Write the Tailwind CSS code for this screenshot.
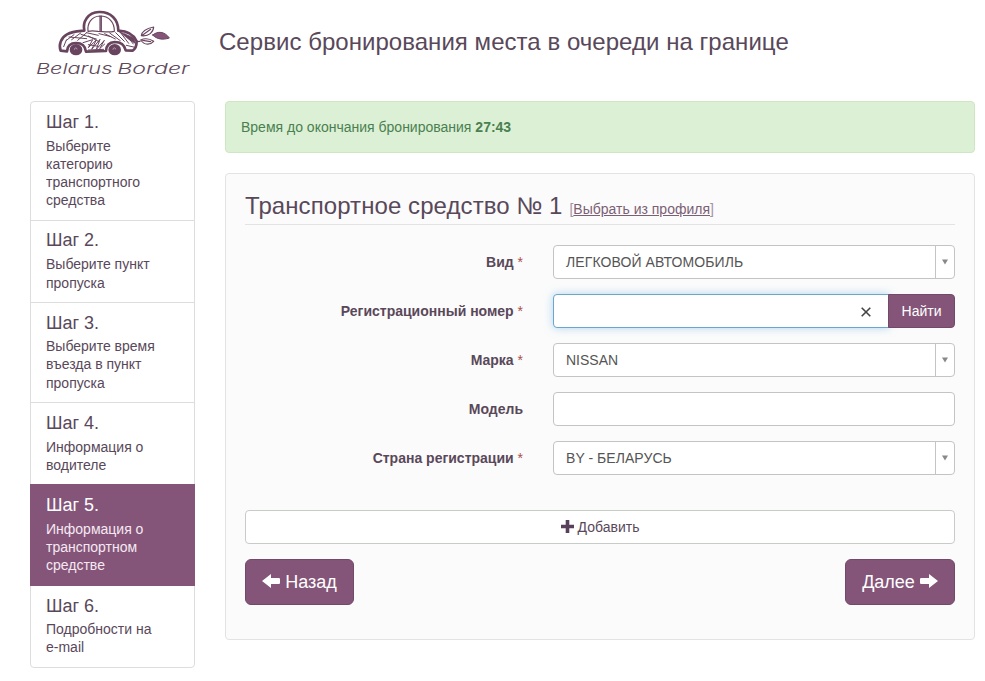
<!DOCTYPE html>
<html lang="ru">
<head>
  <meta charset="UTF-8">
  <meta name="viewport" content="width=device-width, initial-scale=1.0">
  <title>Belarus Border</title>
  <script src="https://cdn.jsdelivr.net/npm/@tailwindcss/browser@4"></script>
</head>
<body class="bg-white font-['Liberation_Sans',Arial,sans-serif] text-sm leading-5 text-[#59485a] h-[681px] overflow-hidden">
  <!-- Header -->
  <header class="flex h-[101px] pl-[25px]">
    <svg class="w-[180px] h-[90px] shrink-0" viewBox="0 0 540 270" fill="none" stroke="#69445f" stroke-linecap="round" stroke-linejoin="round">
      <!-- Car body -->
      <path d="M107 152C100 135 108 113 126 103C143 94 158 94 178 92C172 66 188 37 222 36C257 35 280 58 280 92C303 93 326 103 335 124C335 137 331 147 323 152L302 151C298 133 285 126 269 126C252 127 244 138 243 153L183 155C181 138 170 129 153 129C135 129 127 140 126 154Z" stroke-width="8"/>
      <!-- Windows -->
      <path d="M189 94C186 70 199 49 225 48C252 48 269 67 268 94C250 98 237 95 219 94C207 92 197 92 189 94Z" stroke-width="3.5"/>
      <path d="M225 48V93M229 48V94" stroke-width="3.5"/>
      <!-- Hatching -->
      <path d="M116 140L124 120M124 121L147 104M140 119L167 99M158 121L184 99M132 111L185 116M168 103L214 117M184 98L220 106M174 128L203 119L190 143L214 120L200 148L225 118L214 148L238 121L224 146L239 132M190 108L222 125M222 101L258 110M239 101L271 117M254 99L286 122M272 98L298 124M286 97L311 130M300 101L325 132M304 136L326 141M190 134L220 139M190 150L236 148" stroke-width="3"/>
      <path d="M283 95L326 113L332 131L314 120Z" fill="#69445f" stroke-width="2"/>
      <path d="M335 125L345 124" stroke-width="4"/>
      <!-- Wheels -->
      <ellipse cx="153" cy="149" rx="19" ry="17" fill="#69445f" stroke="none"/>
      <ellipse cx="269" cy="149" rx="19" ry="17" fill="#69445f" stroke="none"/>
      <path d="M148 148C148 142 156 142 156 147M264 148C264 142 272 142 272 147" stroke="#d9c9d6" stroke-width="2"/>
      <!-- Leaves -->
      <path d="M349 107C351 91 366 85 386 81C385 96 372 110 349 107ZM353 105L377 88M347 120C362 113 374 116 386 124C376 135 359 137 347 120ZM353 121L377 125" stroke-width="3.5"/>
      <path d="M383 105C398 92 419 94 433 114C414 120 397 119 383 105Z" fill="#845578" stroke-width="3"/>
      <g fill="#5f4a5c" stroke="none" font-family="Inter" font-weight="300" font-style="italic" font-size="45">
        <text x="33" y="221" textLength="229" lengthAdjust="spacingAndGlyphs">Belarus</text>
        <text x="277" y="221" textLength="216" lengthAdjust="spacingAndGlyphs">Border</text>
      </g>
    </svg>
    <h1 class="ml-[14px] mt-[27px] text-2xl leading-[30px] tracking-[0.04px] whitespace-nowrap">Сервис бронирования места в очереди на границе</h1>
  </header>

  <div class="flex items-start gap-[30px] px-[30px]">
    <!-- Steps -->
    <nav class="w-[165px] shrink-0 rounded border border-[#ddd] leading-[18.2px]">
      <div class="px-[15px] py-[10px] border-b border-[#ddd]">
        <h4 class="mb-[4px] pt-px text-lg leading-[19.8px]">Шаг 1.</h4>
        <p>Выберите категорию транспортного средства</p>
      </div>
      <div class="px-[15px] py-[10px] border-b border-[#ddd]">
        <h4 class="mb-[5px] text-lg leading-[19.8px]">Шаг 2.</h4>
        <p>Выберите пункт пропуска</p>
      </div>
      <div class="px-[15px] py-[10px] border-b border-[#ddd]">
        <h4 class="mb-[4px] pt-px text-lg leading-[19.8px]">Шаг 3.</h4>
        <p class="-mt-[0.4px] mb-[0.4px]">Выберите время въезда в пункт пропуска</p>
      </div>
      <div class="px-[15px] py-[10px]">
        <h4 class="mb-[4px] pt-px text-lg leading-[19.8px]">Шаг 4.</h4>
        <p>Информация о водителе</p>
      </div>
      <div class="-mx-px px-4 py-[10px] border-y border-[#845578] bg-[#845578] text-white">
        <h4 class="mb-[4px] pt-px text-lg leading-[19.8px]">Шаг 5.</h4>
        <p class="-mt-[0.4px] mb-[0.4px] text-[#f6e8f3]">Информация о транспортном средстве</p>
      </div>
      <div class="px-[15px] py-[10px]">
        <h4 class="mb-[4px] pt-px text-lg leading-[19.8px]">Шаг 6.</h4>
        <p class="-mt-[0.4px] mb-[0.4px]">Подробности на<br>e-mail</p>
      </div>
    </nav>

    <main class="w-[750px] shrink-0">
      <!-- Countdown -->
      <div class="mb-5 h-[52px] rounded border border-[#cfe6c3] bg-[#dcf0d6] px-[15px] py-[15px] text-[#4a8050]">
        Время до окончания бронирования <b>27:43</b>
      </div>

      <section class="h-[467px] rounded border border-[#e3e3e3] bg-[#fbfbfb] px-[19px] pt-[17px]">
        <div class="mb-5 flex h-[34px] items-baseline border-b border-[#e3e3e3] whitespace-nowrap">
          <h2 class="text-2xl leading-[30px] tracking-[0.08px]">Транспортное средство № 1</h2>
          <span class="ml-[7px] text-[#a294a0]">[<a href="#" class="text-[#7b5f75] underline">Выбрать из профиля</a>]</span>
        </div>

        <form class="flex flex-col gap-[15px]">
          <div class="flex h-[34px]">
            <label class="w-[278px] mr-[30px] pt-[7px] text-right font-bold">Вид <span class="font-normal text-[#a8504c]">*</span></label>
            <div class="flex flex-1 rounded border border-[#c4c4c4] bg-white text-[#555]">
              <span class="flex-1 px-3 py-[6px] tracking-[0.1px]">ЛЕГКОВОЙ АВТОМОБИЛЬ</span>
              <span class="flex w-[19px] items-center justify-center border-l border-[#c4c4c4] pr-px"><svg class="size-[6px]" viewBox="0 0 6 6" fill="#888"><path d="M0 .5h6L3 5.5z"/></svg></span>
            </div>
          </div>
          <div class="flex h-[34px]">
            <label class="w-[278px] mr-[30px] pt-[7px] text-right font-bold">Регистрационный номер <span class="font-normal text-[#a8504c]">*</span></label>
            <div class="flex flex-1 items-center justify-end rounded-l border border-[#6ca6c8] bg-white pt-[2px] pr-[17px] shadow-[0_0_8px_rgba(102,175,233,0.5)]">
              <svg class="size-[10px]" viewBox="0 0 10 10" stroke="#444" stroke-width="1.6"><path d="M.7.7l8.6 8.6M9.3.7L.7 9.3"/></svg>
            </div>
            <button type="button" class="relative w-[67px] -ml-px rounded-r border border-[#724a68] bg-[#845578] text-white">Найти</button>
          </div>
          <div class="flex h-[34px]">
            <label class="w-[278px] mr-[30px] pt-[7px] text-right font-bold">Марка <span class="font-normal text-[#a8504c]">*</span></label>
            <div class="flex flex-1 rounded border border-[#c4c4c4] bg-white text-[#555]">
              <span class="flex-1 px-3 py-[6px]">NISSAN</span>
              <span class="flex w-[19px] items-center justify-center border-l border-[#c4c4c4] pr-px"><svg class="size-[6px]" viewBox="0 0 6 6" fill="#888"><path d="M0 .5h6L3 5.5z"/></svg></span>
            </div>
          </div>
          <div class="flex h-[34px]">
            <label class="w-[278px] mr-[30px] pt-[7px] text-right font-bold">Модель</label>
            <div class="flex-1 rounded border border-[#c4c4c4] bg-white"></div>
          </div>
          <div class="flex h-[34px]">
            <label class="w-[278px] mr-[30px] pt-[7px] text-right font-bold">Страна регистрации <span class="font-normal text-[#a8504c]">*</span></label>
            <div class="flex flex-1 rounded border border-[#c4c4c4] bg-white text-[#555]">
              <span class="flex-1 px-3 py-[6px] tracking-[0.05px]">BY - БЕЛАРУСЬ</span>
              <span class="flex w-[19px] items-center justify-center border-l border-[#c4c4c4] pr-px"><svg class="size-[6px]" viewBox="0 0 6 6" fill="#888"><path d="M0 .5h6L3 5.5z"/></svg></span>
            </div>
          </div>

          <button type="button" class="mt-5 flex h-[34px] items-center justify-center gap-1 rounded border border-[#c8ccc6] bg-white">
            <svg class="-mt-px size-[13px]" viewBox="0 0 13 13" fill="#59405a"><path d="M4.7 0h3.6v4.7H13v3.6H8.3V13H4.7V8.3H0V4.7h4.7z"/></svg>
            Добавить
          </button>
          <div class="flex justify-between text-lg text-white">
            <button type="button" class="flex h-[46px] w-[109px] items-center justify-center gap-[5px] rounded-md border border-[#724a68] bg-[#845578]">
              <svg class="-mt-[2px] h-[14px] w-[18px]" viewBox="0 0 18 14" fill="currentColor"><path d="M0 7L9 0v4h8.2l.8.8v4.4l-.8.8H9v4z"/></svg>
              Назад
            </button>
            <button type="button" class="flex h-[46px] w-[110px] items-center justify-center gap-[5px] rounded-md border border-[#724a68] bg-[#845578]">
              Далее
              <svg class="-mt-[2px] h-[14px] w-[18px]" viewBox="0 0 18 14" fill="currentColor"><path d="M18 7L9 0v4H.8L0 4.8v4.4l.8.8H9v4z"/></svg>
            </button>
          </div>
        </form>
      </section>
    </main>
  </div>
</body>
</html>
